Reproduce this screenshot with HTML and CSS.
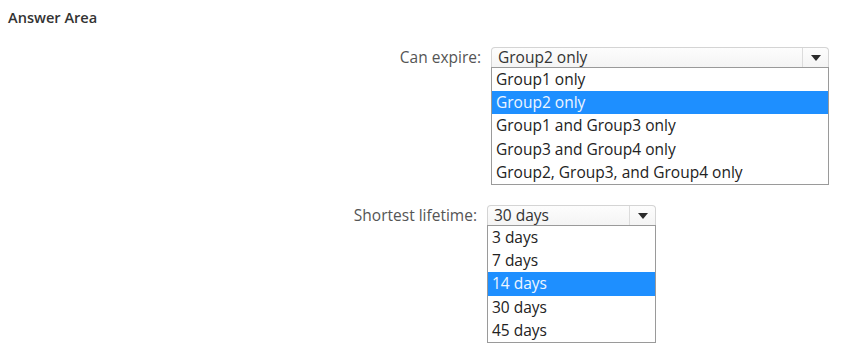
FILE: index.html
```html
<!DOCTYPE html>
<html>

<head>
  <meta charset='utf-8'>
  <title>Answer Area</title>
  <meta name='viewport' content='width=device-width, initial-scale=1'>
  <link rel="stylesheet" href="styles.css">
</head>

<body>
  <h4 class="area-title">Answer Area</h4>

  <div class="row row-expire">
    <label class="row-label">Can expire:</label>
    <div class="dropdown">
      <div class="dropdown-head">
        <span class="dropdown-value">Group2 only</span>
        <span class="dropdown-btn"><span class="arrow"></span></span>
      </div>
      <ul class="dropdown-list">
        <li>Group1 only</li>
        <li class="selected">Group2 only</li>
        <li>Group1 and Group3 only</li>
        <li>Group3 and Group4 only</li>
        <li>Group2, Group3, and Group4 only</li>
      </ul>
    </div>
  </div>

  <div class="row row-lifetime">
    <label class="row-label">Shortest lifetime:</label>
    <div class="dropdown">
      <div class="dropdown-head">
        <span class="dropdown-value">30 days</span>
        <span class="dropdown-btn"><span class="arrow"></span></span>
      </div>
      <ul class="dropdown-list">
        <li>3 days</li>
        <li>7 days</li>
        <li class="selected">14 days</li>
        <li>30 days</li>
        <li>45 days</li>
      </ul>
    </div>
  </div>
</body>

</html>
```

FILE: styles.css
```css
* {
  box-sizing: border-box;
  margin: 0;
  padding: 0;
  font-family: "Open Sans", "Noto Sans", sans-serif;
}

body {
  background-color: #fff;
  color: #333;
  padding: 8px 8px 0;
}

.area-title {
  font-size: 14.6px;
  font-weight: 600;
  color: #333;
  line-height: 18px;
}

.row {
  display: flex;
  align-items: flex-start;
}

.row-label {
  font-size: 15.5px;
  color: #555;
  text-align: right;
  padding-right: 10px;
  line-height: 20px;
}

.row-expire {
  margin-top: 21px;
}

.row-expire .row-label {
  width: 483px;
}

.row-expire .dropdown {
  width: 338px;
}

.row-lifetime {
  margin-top: 20px;
}

.row-lifetime .row-label {
  width: 479px;
}

.row-lifetime .dropdown {
  width: 169px;
}

.dropdown-head {
  display: flex;
  height: 20px;
  border: 1px solid #d4d4d4;
  border-bottom: none;
  border-radius: 4px 4px 0 0;
  background: linear-gradient(#fdfdfd, #f4f4f4);
  overflow: hidden;
}

.dropdown-value {
  flex: 1;
  font-size: 15.5px;
  line-height: 19px;
  padding-left: 6px;
  color: #333;
}

.dropdown-btn {
  width: 26px;
  border-left: 1px solid #dcdcdc;
  display: flex;
  justify-content: center;
  padding-top: 7px;
}

.arrow {
  width: 0;
  height: 0;
  border-left: 5px solid transparent;
  border-right: 5px solid transparent;
  border-top: 6px solid #2b2b2b;
}

.dropdown-list {
  list-style: none;
  border: 1px solid #9a9a9a;
  background: #fff;
}

.dropdown-list li {
  font-size: 15.5px;
  height: 23.2px;
  line-height: 23px;
  padding-left: 4px;
  color: #222;
  white-space: nowrap;
}

.dropdown-list li.selected {
  background-color: #1e8fff;
  color: #eef6ff;
}
```
